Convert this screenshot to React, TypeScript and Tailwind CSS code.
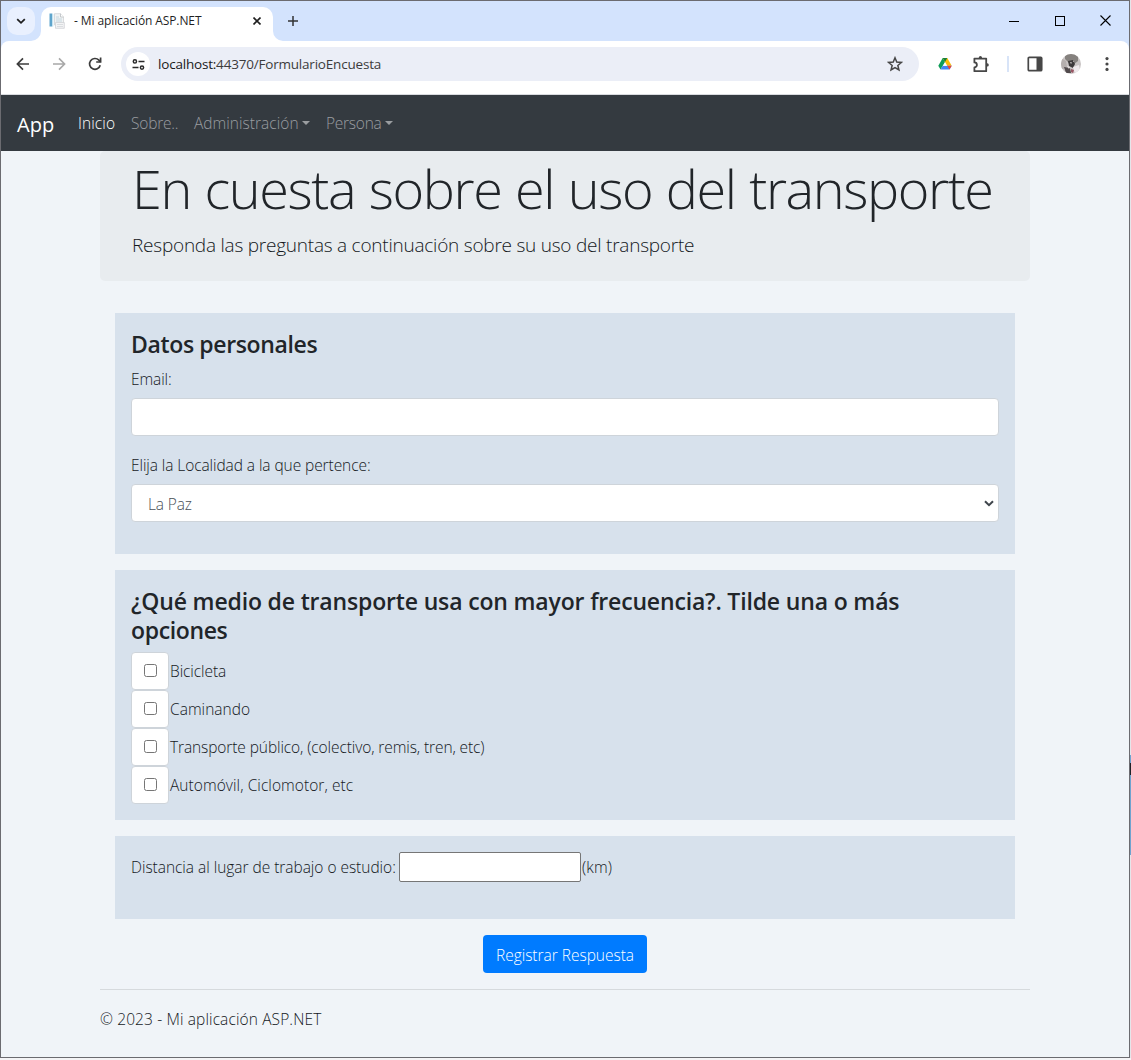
import type { ReactNode } from "react";

function TabFlare({ className }: { className: string }) {
  return (
    <svg viewBox="0 0 10 10" className={className} fill="#fff">
      <path d="M10 0v10H0A10 10 0 0 0 10 0Z" />
    </svg>
  );
}

function TitleBar() {
  return (
    <div className="flex h-10 shrink-0 bg-[#d3e3fd]">
      <div className="mt-1.5 ml-1.5 flex size-7 items-center justify-center rounded-[10px] bg-[#e9f0fe]">
        <svg viewBox="0 0 10 10" className="size-2.5" fill="none" stroke="#1f1f1f" strokeWidth="1.8">
          <path d="M1.2 3.2 5 6.8 8.8 3.2" />
        </svg>
      </div>
      <div className="relative mt-1.5 ml-1.5 flex h-[34px] w-[232px] items-center rounded-t-[10px] bg-white pb-[7px]">
        <TabFlare className="absolute bottom-0 -left-2.5 size-2.5" />
        <TabFlare className="absolute -right-2.5 bottom-0 size-2.5 -scale-x-100" />
        <svg viewBox="0 0 16 16" className="ml-2 size-4">
          <path d="M.5.5h2.8v13H.5z" fill="#5fa5cc" />
          <path d="M3.3.8h1v12.7h-1z" fill="#c4e2ee" />
          <path d="M5.5.7h6L14.5 4v8H5.5z" fill="#f1f3f4" stroke="#d0d3d6" strokeWidth=".8" />
          <path d="M11.5.7V4h3" fill="#fff" stroke="#b9bec2" strokeWidth=".8" />
          <path d="M7 4h3M7 6h6M7 8h6" stroke="#bcd0dc" strokeWidth=".8" />
          <path d="M6.5 9.5h8.8v5.8H6.5z" fill="#f3f4f5" stroke="#cfd2d5" strokeWidth=".8" />
          <path d="M8 11.5h6M8 13.5h6" stroke="#d3d7da" strokeWidth=".8" />
        </svg>
        <span className="ml-[9px] text-[12px] tracking-[-0.1px] whitespace-nowrap text-[#1f1f1f]">
          - Mi aplicación ASP.NET
        </span>
        <svg viewBox="0 0 8 8" className="mr-3 ml-auto size-2" stroke="#1f1f1f" strokeWidth="1.6">
          <path d="m.5.5 7 7m0-7-7 7" />
        </svg>
      </div>
      <svg viewBox="0 0 10 10" className="mt-[15px] ml-[15px] size-2.5" stroke="#333" strokeWidth="1.5">
        <path d="M5 0v10M0 5h10" />
      </svg>
      <div className="mr-[18px] ml-auto flex h-[39px] items-center gap-[35px]">
        <svg viewBox="0 0 11 11" className="size-[11px]" stroke="#000" shapeRendering="crispEdges">
          <path d="M.5 6h10" />
        </svg>
        <svg viewBox="0 0 11 11" className="size-[11px]" fill="none" stroke="#000" shapeRendering="crispEdges">
          <path d="M1 1h9v9H1z" />
        </svg>
        <svg viewBox="0 0 11 11" className="size-[11px]" stroke="#000" strokeWidth="1.1">
          <path d="m.5.5 10 10m0-10-10 10" />
        </svg>
      </div>
    </div>
  );
}

function Toolbar() {
  return (
    <div className="shrink-0 bg-[#d3e3fd]">
      <div className="flex h-[54px] items-center rounded-t-[8px] border-b border-[#d9dbdf] bg-white pb-[7px] pl-[15px]">
        <svg viewBox="0 0 14 14" className="size-3.5" fill="none" stroke="#3c3c3c" strokeWidth="1.7">
          <path d="M13 7H1.8M7 1.4 1.4 7 7 12.6" />
        </svg>
        <svg viewBox="0 0 14 14" className="ml-[22px] size-3.5" fill="none" stroke="#a8a8a8" strokeWidth="1.6">
          <path d="M1 7h11.2M7 1.4 12.6 7 7 12.6" />
        </svg>
        <svg viewBox="0 0 14 14" className="ml-[22px] size-3.5" fill="none" stroke="#3c3c3c" strokeWidth="1.7">
          <path d="M12.2 8.2A5.4 5.4 0 1 1 10.9 3.2L12.6 5" />
          <path d="M12.6.6V5H8.2" />
        </svg>
        <div className="ml-[19px] flex h-[34px] w-[798px] items-center rounded-full bg-[#ebeef7]">
          <div className="ml-[5px] flex size-6 items-center justify-center rounded-full bg-white">
            <svg viewBox="0 0 13 11" className="h-[11px] w-[13px]" fill="none" stroke="#2a2a2a" strokeWidth="1.5">
              <circle cx="2.9" cy="2.4" r="1.6" />
              <path d="M6.5 2.4H12.5M.5 8.6h6" />
              <circle cx="10" cy="8.6" r="1.6" />
            </svg>
          </div>
          <span className="ml-2 text-[13.5px] font-[370] tracking-[-0.2px] whitespace-nowrap text-[#3c3c3c]">
            <span className="text-[#1a1a1a]">localhost:</span>44370/FormularioEncuesta
          </span>
          <svg viewBox="0 0 16 16" className="mr-4 ml-auto size-4" fill="none" stroke="#474747" strokeWidth="1.5">
            <path d="m8 1.8 1.75 4.3 4.6.35-3.5 3L11.95 14 8 11.55 4.05 14l1.1-4.55-3.5-3 4.6-.35Z" />
          </svg>
        </div>
        <svg viewBox="0 0 14 12" className="ml-[19px] h-3 w-3.5">
          <path d="M4.7 0 .3 7.7 2.5 11.6 7 3.9Z" fill="#0f9d58" />
          <path d="M4.7 0h4.6l4.4 7.7H9.2Z" fill="#fbbc04" />
          <path d="M4.7 0h4.6L7 3.9Z" fill="#188038" />
          <path d="M4.7 7.7h9l-2.2 3.9h-9Z" fill="#4285f4" />
          <path d="M9.2 7.7h4.5l-2.2 3.9Z" fill="#ea4335" />
          <path d="m7 4.5 1.8 3.2H5.1Z" fill="#fff" />
        </svg>
        <svg viewBox="0 0 18 18" className="ml-5 size-[18px]" fill="none" stroke="#474747" strokeWidth="1.8" strokeLinejoin="round">
          <path d="M2.4 3.6h11.8v12.6H2.4v-3.8a2.5 2.5 0 0 0 0-5Z" />
          <path d="M6.8 3V2.6a1.6 1.6 0 0 1 3.2 0V3ZM14.8 8.3h.4a1.6 1.6 0 0 1 0 3.2h-.4Z" fill="#474747" stroke="none" />
        </svg>
        <div className="ml-[17px] h-4 w-0.5 bg-[#d8e4f8]" />
        <svg viewBox="0 0 16 16" className="ml-[18px] size-4" fill="none" stroke="#474747" strokeWidth="1.7">
          <rect x="1.3" y="1.3" width="13.4" height="13.4" rx="1" />
          <path d="M9.5 1.3h5.2v13.4H9.5z" fill="#474747" stroke="none" />
        </svg>
        <svg viewBox="0 0 20 20" className="ml-[18px] size-5 rounded-full">
          <path d="M0 0h20v20H0z" fill="#c9c4c4" />
          <path d="M4 0h13v7l-4 3-5-1-4-4Z" fill="#85817e" />
          <path d="M0 4l5 3 1 6-6 3Z" fill="#b5afae" />
          <path d="M7 7l5-1 2 4-2 4-4-2Z" fill="#3c393a" />
          <path d="M9 8l2 .6-1 1.5ZM12 6.5l1 1-1 .6Z" fill="#ddd8d8" />
          <path d="M3 13l6 1 1 5H5Z" fill="#514a4c" />
          <path d="M6 12l3 1-1 2Z" fill="#e9e4e4" />
          <path d="M12 13l6-2 1 5-5 4Z" fill="#efe9ec" />
          <path d="M10 15l3 1-1 3-2-1Z" fill="#9a5563" />
        </svg>
        <svg viewBox="0 0 4 14" className="ml-6 h-3.5 w-1" fill="#474747">
          <circle cx="2" cy="1.6" r="1.6" />
          <circle cx="2" cy="7" r="1.6" />
          <circle cx="2" cy="12.4" r="1.6" />
        </svg>
      </div>
    </div>
  );
}

function Caret() {
  return <span className="mb-[3px] ml-[3px] border-x-[4.5px] border-t-[4.5px] border-x-transparent border-t-current" />;
}

function SiteNav() {
  return (
    <nav className="flex h-14 shrink-0 items-center bg-[#343a40] pt-0.5 pl-4 text-[15.5px] whitespace-nowrap text-[#9a9da0]">
      <span className="w-[61px] pt-0.5 text-[20px] tracking-[0.1px] text-white">App</span>
      <span className="w-[53px] font-[350] tracking-[0.1px] text-white">Inicio</span>
      <span className="w-[63px] font-[350] tracking-[-0.2px]">Sobre..</span>
      <span className="flex w-[132px] items-center font-[350]">
        <span className="w-[105px] tracking-[0.03px]">Administración</span>
        <Caret />
      </span>
      <span className="flex items-center font-[350]">
        <span className="w-[56px] tracking-[-0.25px]">Persona</span>
        <Caret />
      </span>
    </nav>
  );
}

function Card({ className, children }: { className: string; children: ReactNode }) {
  return <section className={`mx-[15px] bg-[#d7e1ec] px-4 ${className}`}>{children}</section>;
}

const heading = "text-[23px] leading-[29px] font-semibold";

const options = [
  { label: "Bicicleta", tracking: "tracking-[-0.08px]" },
  { label: "Caminando", tracking: "tracking-[0.03px]" },
  { label: "Transporte público, (colectivo, remis, tren, etc)", tracking: "tracking-[-0.1px]" },
  { label: "Automóvil, Ciclomotor, etc", tracking: "tracking-[0.06px]" },
];

export default function App() {
  return (
    <div className="flex h-[1060px] w-[1131px] overflow-hidden bg-[#f4f4f6] font-['Open_Sans','Noto_Sans',sans-serif]">
      <div className="flex h-[1058px] w-[1130px] shrink-0 flex-col border border-[#6b6b70] bg-[#f0f4f8]">
        <TitleBar />
        <Toolbar />
        <SiteNav />
        <main className="ml-[99px] w-[930px] text-[15.5px] leading-6 font-[350] text-[#14181c]">
          <header className="h-[130px] rounded-[5px] bg-[#e8ecef] px-8 pt-1 whitespace-nowrap">
            <h1 className="text-[54px] leading-[67px] font-light tracking-[-1.4px] text-[#212529] [word-spacing:1px]">
              En cuesta sobre el uso del transporte
            </h1>
            <p className="mt-2 text-[19px] leading-[30px] font-light tracking-[-0.23px]">
              Responda las preguntas a continuación sobre su uso del transporte
            </p>
          </header>

          <Card className="mt-8 h-[241px] pt-[17px]">
            <h3 className={`${heading} tracking-[-0.36px] text-[#212529]`}>Datos personales</h3>
            <label className="mt-2 block tracking-[-0.1px]">Email:</label>
            <input className="mt-[7px] block h-[38px] w-full rounded-[4px] border border-[#ced4da] bg-white px-3 outline-none" />
            <label className="mt-[17px] block tracking-[-0.08px]">Elija la Localidad a la que pertence:</label>
            <div className="mt-[7px] flex h-[38px] w-full items-center justify-between rounded-[4px] border border-[#ced4da] bg-white pr-1 pl-4 text-[#495057]">
              <span className="pt-px tracking-[-0.15px]">La Paz</span>
              <svg viewBox="0 0 10 7" className="h-[7px] w-2.5" fill="none" stroke="#3f454b" strokeWidth="2">
                <path d="M1 1.2 5 5.2 9 1.2" />
              </svg>
            </div>
          </Card>

          <Card className="mt-4 h-[250px] pt-[17px]">
            <h3 className={`${heading} tracking-[-0.16px] text-[#212529]`}>
              ¿Qué medio de transporte usa con mayor frecuencia?. Tilde una o más
              <br />
              <span className="tracking-[-0.36px]">opciones</span>
            </h3>
            <div className="mt-[7px]">
              {options.map(({ label, tracking }) => (
                <label key={label} className="flex h-[38px] items-center">
                  <span className="flex size-[38px] items-center justify-center rounded-[4px] border border-[#ced4da] bg-white">
                    <span className="mb-px ml-px size-[13px] rounded-[2.5px] border border-[#767676] bg-white" />
                  </span>
                  <span className={`ml-px ${tracking}`}>{label}</span>
                </label>
              ))}
            </div>
          </Card>

          <Card className="mt-4 h-[83px] pt-4">
            <div className="flex h-[30px] items-center whitespace-nowrap">
              <span className="w-[268px] tracking-[-0.03px]">Distancia al lugar de trabajo o estudio:</span>
              <input className="h-[30px] w-[182px] rounded-[2px] border border-[#767676] bg-white outline-none" />
              <span className="ml-px tracking-[0.15px]">(km)</span>
            </div>
          </Card>

          <div className="mt-4 flex justify-center">
            <button className="h-[38px] w-[164px] rounded-[4px] bg-[#007bff] pt-px tracking-[-0.02px] whitespace-nowrap text-white">
              Registrar Respuesta
            </button>
          </div>
          <footer className="mt-4 border-t border-[#d6dadd] pt-[17px]">
            <p className="tracking-[0.12px]">© 2023 - Mi aplicación ASP.NET</p>
          </footer>
        </main>
      </div>
      <div className="flex h-[1058px] w-px flex-col bg-[#e4e6ea] pt-[755px]">
        <div className="h-[100px] bg-[#6fa3cf] pt-2">
          <div className="h-3 bg-[#1f2328]" />
        </div>
      </div>
    </div>
  );
}
